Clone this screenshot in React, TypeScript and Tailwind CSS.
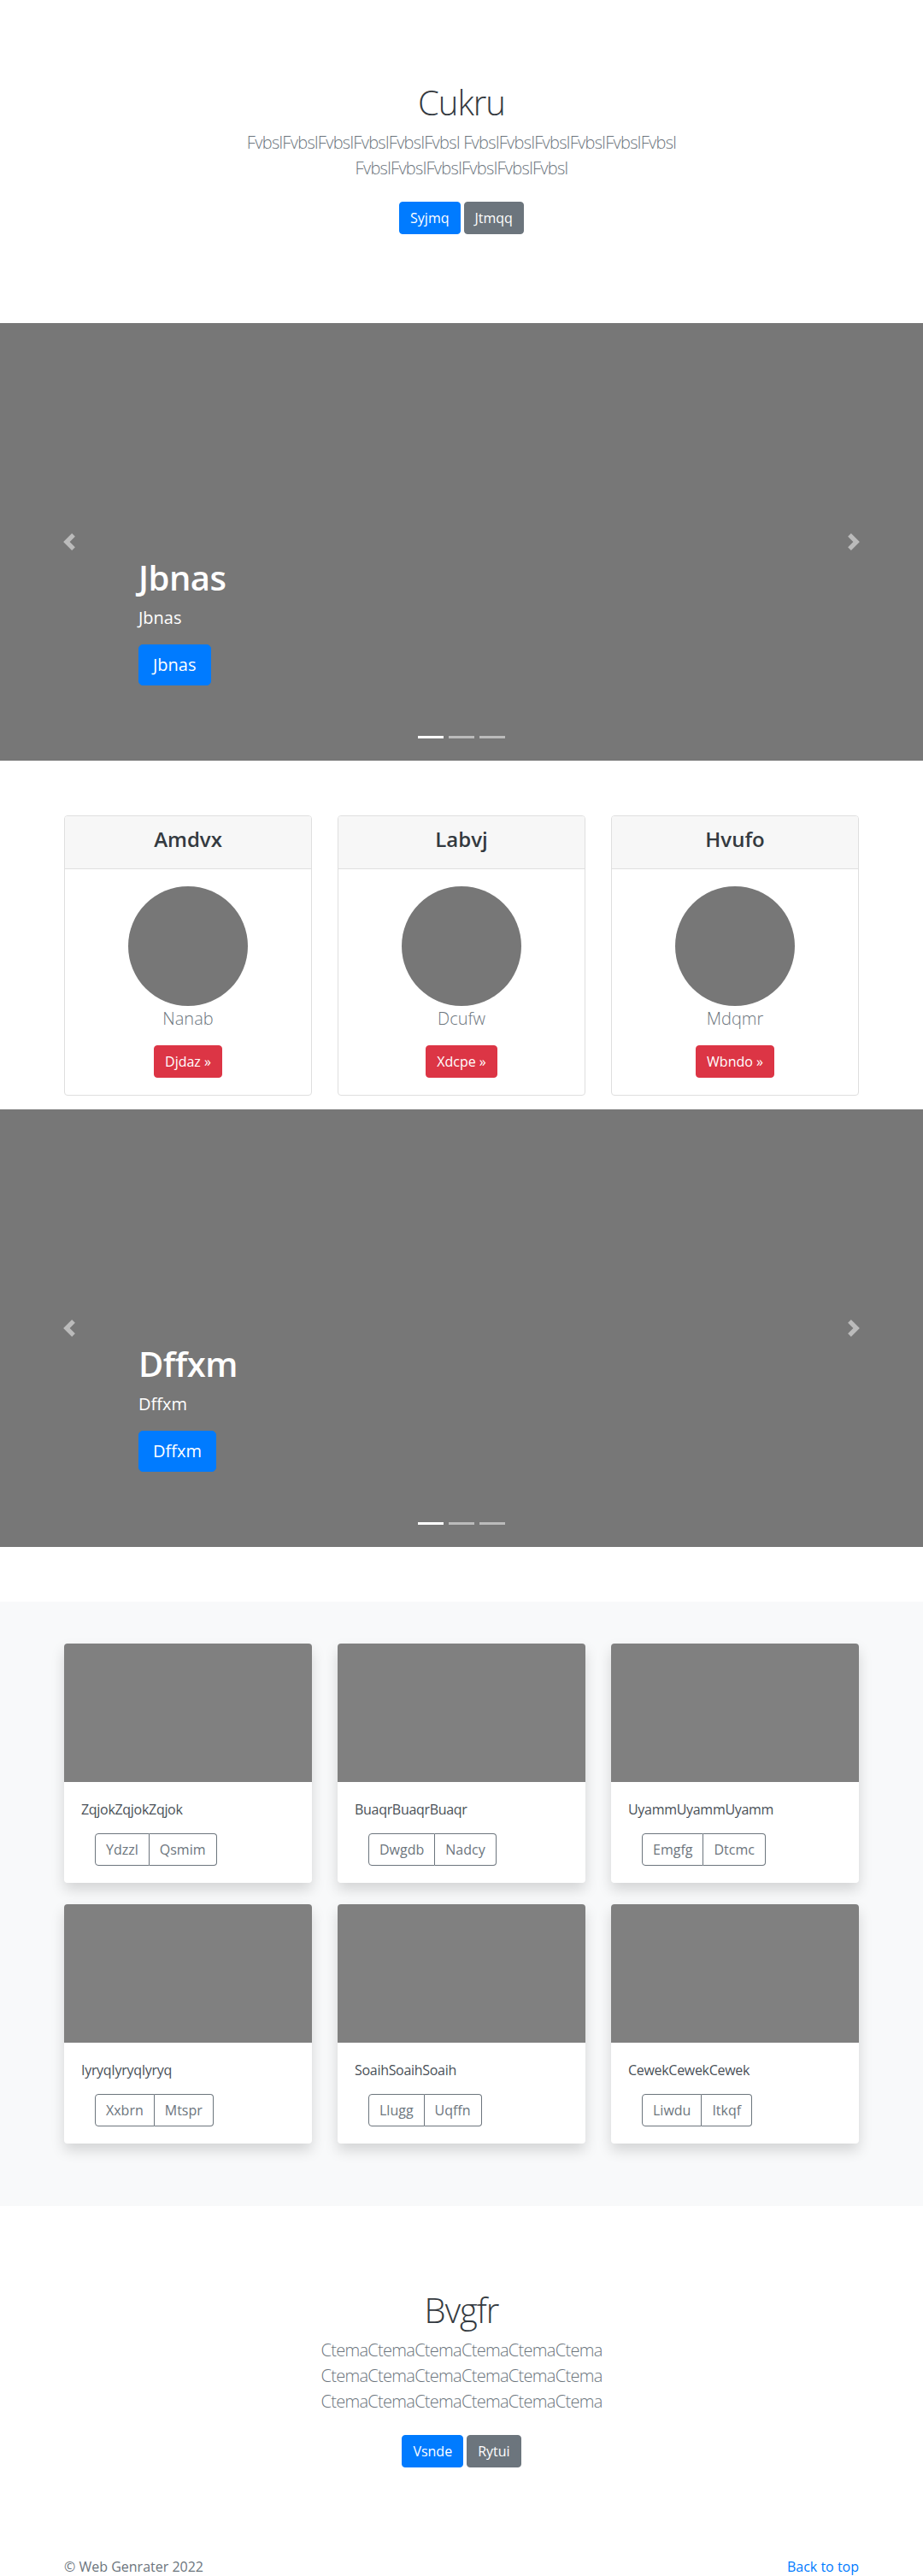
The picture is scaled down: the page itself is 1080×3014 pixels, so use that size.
import React from "react";

function Chevron({ dir }: { dir: "prev" | "next" }) {
  return (
    <svg width="20" height="20" viewBox="0 0 8 8" fill="#fff">
      {dir === "prev" ? (
        <path d="M5.25 0l-4 4 4 4 1.5-1.5L4.25 4l2.5-2.5L5.25 0z" />
      ) : (
        <path d="M2.75 0l-1.5 1.5L3.75 4l-2.5 2.5L2.75 8l4-4-4-4z" />
      )}
    </svg>
  );
}

function Carousel({ label }: { label: string }) {
  return (
    <div className="relative h-[512px] bg-[#777777] overflow-hidden">
      <div className="absolute left-0 top-0 bottom-0 w-[15%] flex items-center justify-center opacity-50">
        <Chevron dir="prev" />
      </div>
      <div className="absolute right-0 top-0 bottom-0 w-[15%] flex items-center justify-center opacity-50">
        <Chevron dir="next" />
      </div>
      <div className="absolute left-[15%] right-[15%] bottom-[88px] text-left text-white">
        <h1 className="text-[40px] leading-[48px] font-semibold tracking-[-0.5px] mb-2">{label}</h1>
        <p className="text-[20px] leading-[30px] font-medium mb-4">{label}</p>
        <a className="inline-block bg-[#007bff] text-white text-[20px] leading-[30px] px-4 py-2 rounded-[5px] border border-[#007bff]">
          {label}
        </a>
      </div>
      <div className="absolute bottom-[26px] left-1/2 -translate-x-1/2 flex gap-[6px]">
        <span className="block w-[30px] h-[3px] bg-white" />
        <span className="block w-[30px] h-[3px] bg-white opacity-50" />
        <span className="block w-[30px] h-[3px] bg-white opacity-50" />
      </div>
    </div>
  );
}

function Btn({ children, color }: { children: React.ReactNode; color: string }) {
  return (
    <a
      className={
        "inline-block text-white text-base leading-6 px-3 py-[6px] rounded border " +
        (color === "blue"
          ? "bg-[#007bff] border-[#007bff]"
          : color === "gray"
          ? "bg-[#6c757d] border-[#6c757d]"
          : "bg-[#dc3545] border-[#dc3545]")
      }
    >
      {children}
    </a>
  );
}

const pricing = [
  { t: "Amdvx", n: "Nanab", b: "Djdaz »" },
  { t: "Labvj", n: "Dcufw", b: "Xdcpe »" },
  { t: "Hvufo", n: "Mdqmr", b: "Wbndo »" },
];

const album = [
  { t: "ZqjokZqjokZqjok", a: "Ydzzl", b: "Qsmim" },
  { t: "BuaqrBuaqrBuaqr", a: "Dwgdb", b: "Nadcy" },
  { t: "UyammUyammUyamm", a: "Emgfg", b: "Dtcmc" },
  { t: "IyryqIyryqIyryq", a: "Xxbrn", b: "Mtspr" },
  { t: "SoaihSoaihSoaih", a: "Llugg", b: "Uqffn" },
  { t: "CewekCewekCewek", a: "Liwdu", b: "Itkqf" },
];

export default function App() {
  const f = "FvbslFvbslFvbslFvbslFvbslFvbsl";
  const c = "CtemaCtemaCtemaCtemaCtemaCtema";
  return (
    <div className="font-['Open_Sans',sans-serif] text-[#212529] bg-white">
      <section className="pt-[96px] pb-[96px] text-center">
        <h1 className="text-[40px] leading-[48px] font-light tracking-[-1px] text-[#343a40] mb-2">Cukru</h1>
        <p className="text-[20px] leading-[30px] font-light text-[#6c757d] tracking-[-0.7px] mb-6">
          {f} {f}
          <br />
          {f}
        </p>
        <div className="flex justify-center gap-1 mb-2">
          <Btn color="blue">Syjmq</Btn>
          <Btn color="gray">Jtmqq</Btn>
        </div>
      </section>

      <Carousel label="Jbnas" />

      <section className="pt-16 pb-4">
        <div className="w-[930px] mx-auto grid grid-cols-3 gap-[30px]">
          {pricing.map((p) => (
            <div key={p.t} className="border border-[#dfdfdf] rounded bg-white text-center overflow-hidden">
              <div className="bg-[#f7f7f7] border-b border-[#dfdfdf] py-3">
                <h4 className="text-[24px] leading-[29px] font-semibold mb-2 text-[#343a40]">{p.t}</h4>
              </div>
              <div className="p-5 flex flex-col items-center">
                <div className="w-[140px] h-[140px] rounded-full bg-[#777777]" />
                <p className="text-[20px] leading-[30px] font-light text-[#6c757d] mb-4">{p.n}</p>
                <Btn color="red">{p.b}</Btn>
              </div>
            </div>
          ))}
        </div>
      </section>

      <Carousel label="Dffxm" />

      <section className="mt-16 bg-[#f8f9fa] pt-[49px] pb-[48px]">
        <div className="w-[930px] mx-auto grid grid-cols-3 gap-x-[30px]">
          {album.map((a) => (
            <div key={a.t} className="mb-[25px] bg-white rounded overflow-hidden shadow-[0_8px_16px_rgba(0,0,0,0.15)]">
              <div className="h-[162px] bg-[#808080]" />
              <div className="p-5">
                <p className="text-base leading-6 text-[#495057] tracking-[-0.3px] mb-4">{a.t}</p>
                <div className="ml-4 inline-flex">
                  <a className="inline-block text-base leading-6 px-3 py-[6px] text-[#6c757d] border border-[#6c757d] rounded-l">
                    {a.a}
                  </a>
                  <a className="inline-block text-base leading-6 px-3 py-[6px] text-[#6c757d] border border-l-0 border-[#6c757d] rounded-r">
                    {a.b}
                  </a>
                </div>
              </div>
            </div>
          ))}
        </div>
      </section>

      <section className="pt-[98px] pb-[48px] text-center">
        <h1 className="text-[40px] leading-[48px] font-light tracking-[-1px] text-[#343a40] mb-2">Bvgfr</h1>
        <p className="text-[20px] leading-[30px] font-light text-[#6c757d] tracking-[-0.7px] mb-6">
          {c}
          <br />
          {c}
          <br />
          {c}
        </p>
        <div className="flex justify-center gap-1 mb-2">
          <Btn color="blue">Vsnde</Btn>
          <Btn color="gray">Rytui</Btn>
        </div>
      </section>

      <footer className="py-12">
        <div className="w-[930px] mx-auto flex justify-between text-base leading-6">
          <p className="text-[#6c757d]">© Web Genrater 2022</p>
          <a className="text-[#007bff]">Back to top</a>
        </div>
      </footer>
    </div>
  );
}
